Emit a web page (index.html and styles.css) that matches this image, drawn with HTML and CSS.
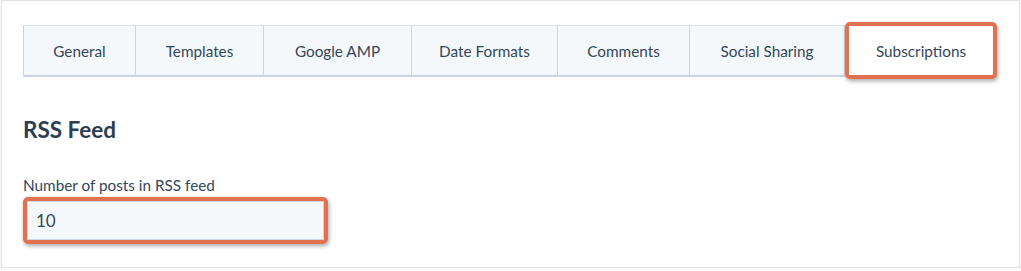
FILE: index.html
```html
<!DOCTYPE html>
<html>
<head>
<meta charset="utf-8">
<link rel="stylesheet" href="styles.css">
</head>
<body>
<div class="frame">
  <div class="tabs">
    <div class="tab t1">General</div>
    <div class="tab t2">Templates</div>
    <div class="tab t3">Google AMP</div>
    <div class="tab t4">Date Formats</div>
    <div class="tab t5">Comments</div>
    <div class="tab t6">Social Sharing</div>
    <div class="tab active">Subscriptions</div>
  </div>
  <h2 class="heading">RSS Feed</h2>
  <div class="label">Number of posts in RSS feed</div>
  <div class="input-wrap"><div class="input">10</div></div>
</div>
</body>
</html>
```
FILE: styles.css
```css
html, body { margin: 0; padding: 0; background: #fff; overflow: hidden; }
body { font-family: Lato, "Open Sans", sans-serif; color: #33475b; }
.frame {
  margin: 0 1px;
  height: 268px;
  box-sizing: border-box;
  border: 1px solid #e2e2e2;
  box-shadow: 0 2px 1px rgba(0,0,0,0.18);
  padding: 24px 21px 0 21px;
}
.tabs { display: flex; align-items: stretch; height: 52px; }
.tab {
  box-sizing: border-box;
  display: flex; align-items: center; justify-content: center;
  background: #f5f8fa;
  border-top: 1px solid #dfe3eb;
  border-bottom: 2px solid #cbd6e2;
  border-right: 1px solid #cbd6e2;
  font-size: 15.3px;
  color: #33475b;
}
.t1 { width: 113px; border-left: 1px solid #cbd6e2; }
.t2 { width: 128px; }
.t3 { width: 148px; }
.t4 { width: 146px; }
.t5 { width: 132px; }
.t6 { width: 155px; }
.tab.active {
  width: 152px;
  margin-top: -3px; height: 57px;
  background: #fff;
  border: 4px solid #e3704f;
  border-radius: 5px;
  box-shadow: 1px 2px 4px rgba(0,0,0,0.35);
}
.heading {
  margin: 40px 0 0 0;
  font-size: 22.5px;
  font-weight: 700;
  line-height: 26px;
  color: #2d3e50;
}
.label { margin-top: 33px; font-size: 15.3px; line-height: 18px; }
.input-wrap {
  margin-top: 3px;
  width: 305px; height: 47px;
  box-sizing: border-box;
  border: 4px solid #e3704f;
  border-radius: 5px;
  box-shadow: 1px 2px 4px rgba(0,0,0,0.35);
}
.input {
  box-sizing: border-box;
  height: 100%;
  background: #f5f8fa;
  border: 1px solid #cbd6e2;
  padding: 0 8px;
  display: flex; align-items: center;
  font-size: 17px;
}
```
